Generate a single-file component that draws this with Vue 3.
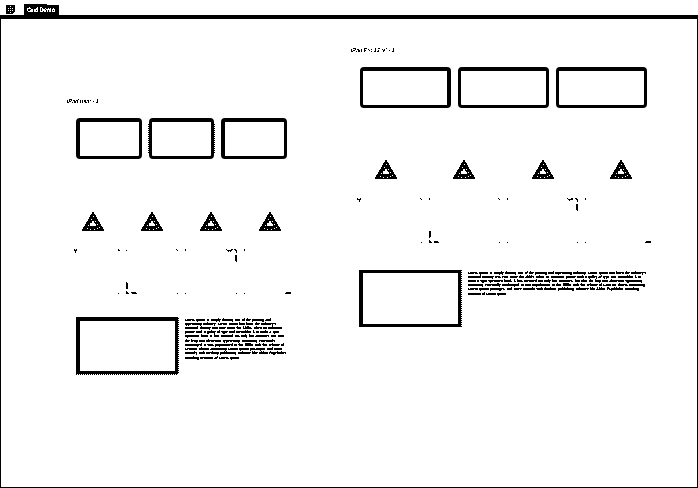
<script setup>
const frames = [
  {
    id: 'mini', title: 'iPad mini - 1', titleW: 32,
    cards: [{ w: 66, l: 4, r: 3 }, { w: 65, l: 3, r: 3, dots: true }, { w: 66, l: 4, r: 3 }],
    triangles: 4,
    marks: [
      [74, 249, 1, 2], [76, 249, 1, 1], [75, 250, 2, 1], [75, 251, 1, 2],
      [118, 249, 1, 1], [118, 250, 2, 1], [126, 250, 1, 1],
      [176, 249, 1, 1], [177, 250, 1, 1], [185, 249, 1, 2],
      [226, 249, 1, 1], [227, 250, 5, 1], [228, 251, 1, 1], [230, 251, 1, 1], [231, 249, 2, 1], [234, 249, 2, 1], [235, 250, 2, 1], [236, 251, 1, 2], [235, 255, 2, 6], [236, 261, 1, 1], [244, 249, 1, 2],
      [118, 293, 1, 1], [126, 282, 1, 1], [126, 283, 2, 6], [126, 291, 1, 3], [127, 292, 1, 2], [128, 293, 1, 1], [131, 292, 5, 1], [132, 293, 5, 1],
      [177, 293, 1, 1], [185, 293, 1, 1], [236, 293, 1, 1], [244, 293, 1, 1], [286, 292, 5, 1], [285, 293, 6, 1]
    ],
    origin: [66, 248], markW: 226,
    textW: 115,
    lines: [
      ['Lorem Ipsum is simply dummy text of the printing and', 86],
      ["typesetting industry. Lorem Ipsum has been the industry's", 91],
      ['standard dummy text ever since the 1500s, when an unknown', 97],
      ['printer took a galley of type and scrambled it to make a type', 94],
      ['specimen book. It has survived not only five centuries, but also', 99],
      ['the leap into electronic typesetting, remaining essentially', 90],
      ['unchanged. It was popularised in the 1960s with the release of', 99],
      ['Letraset sheets containing Lorem Ipsum passages, and more', 97],
      ['recently with desktop publishing software like Aldus PageMaker', 101],
      ['including versions of Lorem Ipsum.', 55]
    ]
  },
  {
    id: 'pro', title: 'iPad Pro 12.9" - 1', titleW: 44,
    cards: [{ w: 91, l: 3, r: 4 }, { w: 91, l: 3, r: 3 }, { w: 91, l: 3, r: 3 }],
    triangles: 4,
    marks: [
      [357, 198, 1, 2], [358, 199, 3, 1], [360, 198, 1, 1], [359, 200, 1, 2],
      [420, 198, 1, 1], [421, 199, 1, 1], [429, 198, 1, 2],
      [498, 198, 1, 1], [499, 199, 1, 1], [507, 198, 1, 2],
      [567, 198, 1, 1], [568, 199, 5, 1], [569, 200, 1, 1], [571, 198, 2, 1], [575, 198, 2, 1], [576, 199, 2, 1], [577, 200, 1, 2], [576, 204, 2, 6], [577, 210, 1, 1], [585, 198, 1, 2],
      [421, 242, 1, 1], [429, 231, 2, 6], [429, 237, 1, 1], [429, 240, 1, 3], [430, 241, 1, 2], [431, 242, 1, 1], [434, 241, 4, 1], [434, 242, 5, 1],
      [499, 242, 1, 1], [507, 242, 1, 1], [577, 242, 1, 1], [585, 242, 1, 1], [646, 241, 5, 1], [645, 242, 6, 1]
    ],
    origin: [350, 197], markW: 304,
    textW: 195,
    lines: [
      ["Lorem Ipsum is simply dummy text of the printing and typesetting industry. Lorem Ipsum has been the industry's", 178],
      ['standard dummy text ever since the 1500s, when an unknown printer took a galley of type and scrambled it to', 173],
      ['make a type specimen book. It has survived not only five centuries, but also the leap into electronic typesetting,', 175],
      ['remaining essentially unchanged. It was popularised in the 1960s with the release of Letraset sheets containing', 177],
      ['Lorem Ipsum passages, and more recently with desktop publishing software like Aldus PageMaker including', 171],
      ['versions of Lorem Ipsum.', 39]
    ]
  }
]
const holes = [[11, 4], [9, 7], [13, 9], [8, 11], [15, 12], [6, 13], [5, 16], [17, 15], [8, 17], [12, 17], [15, 16]]
</script>

<template>
  <div class="app">
    <header class="bar">
      <svg class="logo" width="9" height="9" viewBox="0 0 9 9" shape-rendering="crispEdges">
        <path d="M0 0H9V7H8V8H7V9H0Z" />
        <path class="light" d="M4 1h1v1H4zM2 3h1v1H2zM4 3h1v1H4zM6 3h1v1H6zM2 5h1v1H2zM4 5h1v1H4zM6 5h1v1H6zM4 7h1v1H4z" />
      </svg>
      <svg class="tab" width="35" height="11">
        <path d="M0 0H23V1H35V11H0Z" shape-rendering="crispEdges" />
        <text x="3" y="8" textLength="28" lengthAdjust="spacingAndGlyphs">Grid Demo</text>
      </svg>
    </header>
    <main class="canvas">
      <section v-for="f in frames" :key="f.id" class="frame" :class="f.id">
        <svg class="title" width="60" height="8">
          <text x="0" y="5" :textLength="f.titleW" lengthAdjust="spacingAndGlyphs">{{ f.title }}</text>
        </svg>
        <div class="cards">
          <div
            v-for="(c, i) in f.cards" :key="i" class="card" :class="{ dotted: c.dots }"
            :style="{ width: c.w + 'px', borderLeftWidth: c.l + 'px', borderRightWidth: c.r + 'px' }"
          ></div>
        </div>
        <div class="triangles">
          <svg v-for="n in f.triangles" :key="n" width="22" height="19" viewBox="0 0 22 19" shape-rendering="crispEdges">
            <path d="M10.5 0H11.5L22 18V19H0V18Z" />
            <path class="light" d="M10 9H12V11H13V12H14V14H8V12H9V11H10Z" />
            <rect v-for="(h, k) in holes" :key="k" class="light" :x="h[0]" :y="h[1]" width="1" height="1" />
          </svg>
        </div>
        <svg
          class="marks" :width="f.markW" height="48"
          :viewBox="`${f.origin[0]} ${f.origin[1]} ${f.markW} 48`" shape-rendering="crispEdges"
        >
          <rect v-for="(m, i) in f.marks" :key="i" :x="m[0]" :y="m[1]" :width="m[2]" :height="m[3]" />
        </svg>
        <div class="article">
          <div class="picture"></div>
          <svg class="copy" :width="f.textW" height="46">
            <text
              v-for="(l, i) in f.lines" :key="i" x="0" :y="Math.round(3.6 + i * 4.22)"
              :textLength="l[1]" lengthAdjust="spacingAndGlyphs"
            >{{ l[0] }}</text>
          </svg>
        </div>
      </section>
    </main>
    <svg class="defs" width="0" height="0">
      <filter id="crisp" color-interpolation-filters="sRGB">
        <feComponentTransfer><feFuncA type="discrete" tableValues="0 0 1 1 1" /></feComponentTransfer>
      </filter>
      <filter id="crisp-title" color-interpolation-filters="sRGB">
        <feComponentTransfer><feFuncA type="discrete" tableValues="0 0 1 1 1" /></feComponentTransfer>
      </filter>
      <filter id="crisp-copy" color-interpolation-filters="sRGB">
        <feComponentTransfer><feFuncA type="discrete" tableValues="0 0 0 0 1 1 1 1 1 1 1 1 1 1 1 1" /></feComponentTransfer>
      </filter>
    </svg>
  </div>
</template>

<style>
body { background: #fff; overflow: hidden; }
</style>

<style scoped>
* { box-sizing: border-box; }
.app { width: 698px; height: 488px; display: flex; flex-direction: column; background: #fff; color: #000; font-family: "Liberation Sans", Arial, sans-serif; }
svg { display: block; flex: none; }
text { text-rendering: geometricPrecision; }
.light { fill: #fff; }
.bar { height: 19px; flex: none; display: flex; align-items: flex-start; padding: 4px 0 0 6px; border-bottom: 4px solid #000; }
.logo { margin-top: 1px; }
.tab { margin-left: 9px; }
.tab text { fill: #fff; font-size: 6.4px; font-weight: 700; filter: url(#crisp); }
.canvas { position: relative; flex: 1; border: 1px solid #000; border-top: 0; }
.frame { position: absolute; display: flex; flex-direction: column; align-items: flex-start; }
.mini { left: 65px; top: 79px; }
.pro { left: 349px; top: 28px; }
.title { margin-left: 1px; overflow: visible; font-size: 5.8px; font-style: italic; }
.title text { filter: url(#crisp-title); }
.cards { display: flex; gap: 7px; margin: 12px 0 0 10px; }
.card { position: relative; height: 41px; border: 4px solid #000; border-bottom-width: 3px; border-radius: 4px; }
.dotted::before, .dotted::after { content: ""; position: absolute; top: 2px; bottom: 2px; width: 1px; background: repeating-linear-gradient(#000 0 1px, #fff 1px 2px); }
.dotted::before { left: -4px; }
.dotted::after { right: -4px; }
.triangles { display: flex; gap: 37px; margin: 53px 0 0 16px; }
.pro .triangles { gap: 56.3px; margin: 52px 0 0 25px; }
.marks { margin-top: 17px; }
.pro .marks { margin-top: 18px; }
.article { display: flex; margin: 21px 0 0 10px; }
.pro .article { margin: 25px 0 0 9px; }
.picture { position: relative; width: 102px; height: 57px; border: solid #000; border-width: 4px 3px 3px 4px; }
.pro .picture { border-top-width: 3px; }
.picture::after { content: ""; position: absolute; top: -4px; bottom: -3px; right: -4px; width: 1px; background: repeating-linear-gradient(#fff 0 1px, #000 1px 2px); }
.mini .picture::before { content: ""; position: absolute; left: -4px; right: -3px; bottom: -4px; height: 1px; background: repeating-linear-gradient(90deg, #000 0 1px, #fff 1px 2px); }
.copy { margin-left: 7px; overflow: visible; font-size: 3.8px; font-weight: 700; word-spacing: .7px; filter: url(#crisp-copy); }
</style>
